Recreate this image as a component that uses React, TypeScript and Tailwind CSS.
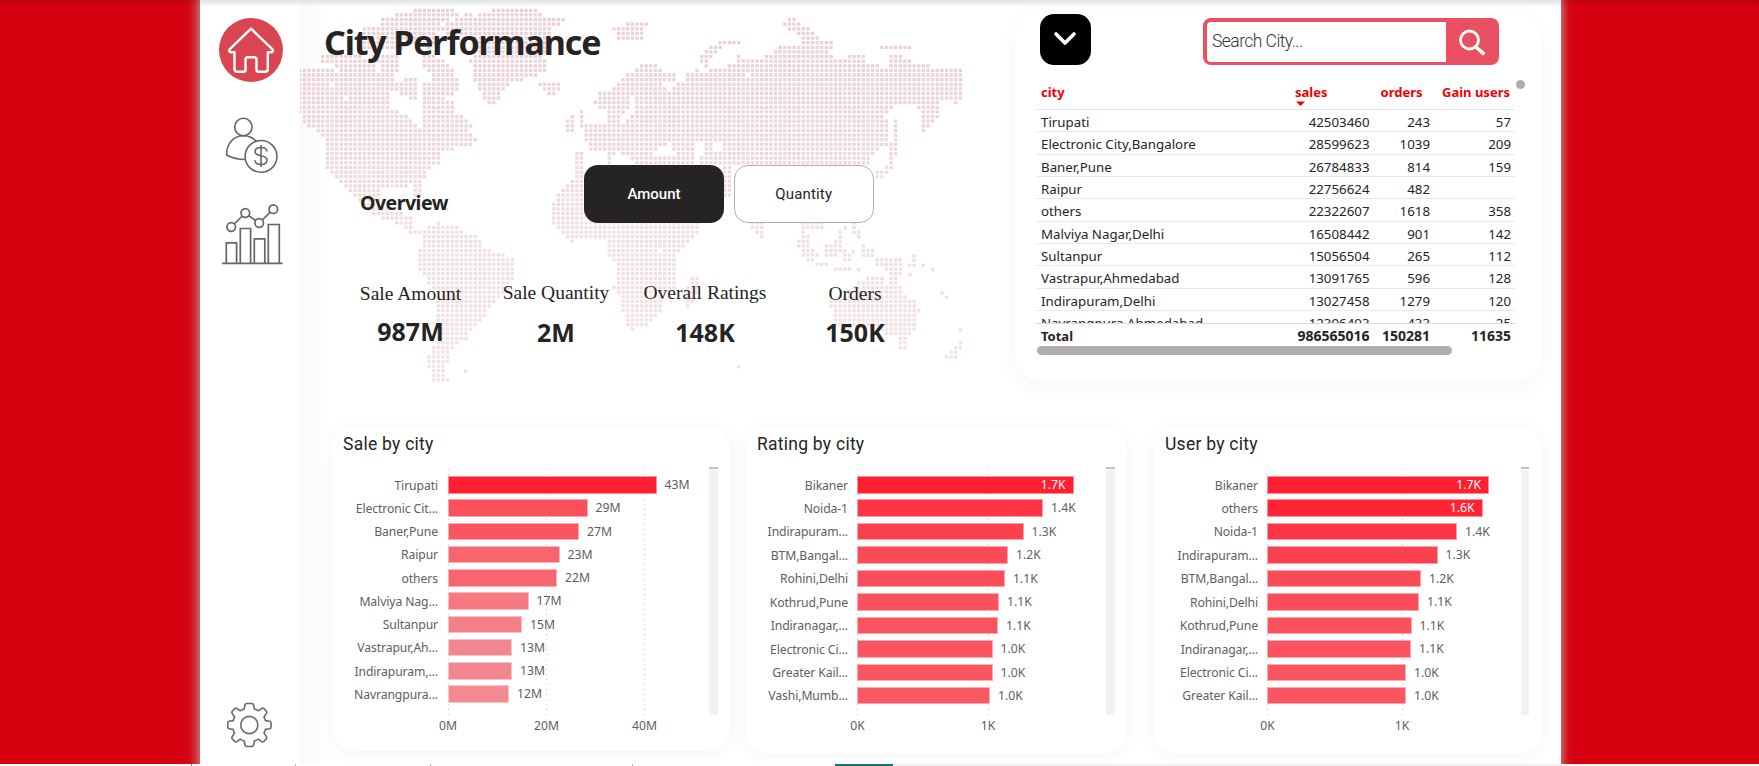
import React from "react";

type Point = [number, number];

/* Land outlines, in the units of the map's own 1986 x 1170 view box. */
const LAND: string[] = [
  // North and Central America
  "-5,205 100,205 105,192 60,192 60,163 110,163 112,178 130,165 190,165 195,178 232,165 290,165 292,215 280,235 300,250 328,225 355,245 355,290 332,302 285,268 268,290 268,332 295,335 325,350 352,375 366,380 366,292 430,292 432,305 462,305 460,340 500,352 516,380 502,400 530,414 530,426 490,442 430,455 418,470 415,490 388,510 380,535 362,552 362,590 343,590 343,556 300,560 245,562 240,590 238,615 262,622 265,636 312,636 312,650 338,650 338,690 375,690 375,706 328,706 310,680 270,662 225,650 200,632 172,600 130,565 115,545 78,505 78,420 60,405 15,370 -5,340",
  // Arctic islands
  "355,25 465,25 472,45 445,66 440,90 405,96 400,150 335,128 300,152 180,150 180,80 240,80 245,52 312,40",
  "368,165 400,165 440,180 465,215 478,245 465,290 368,290 368,255 400,235 368,200",
  "488,38 518,38 518,52 488,52",
  // Greenland
  "576,25 712,25 730,45 795,52 795,64 770,80 750,94 745,150 730,160 742,200 735,215 700,230 640,250 610,270 600,300 588,315 575,312 550,300 535,260 522,240 522,200 505,175 540,160 530,120 440,106 435,66 464,66 464,52 525,52 535,38 570,38",
  // Iceland and Ireland
  "713,247 780,247 780,275 755,290 738,285 735,275 727,262 713,260",
  "798,360 798,400 811,400 822,385 822,345 811,345",
  // South America
  "380,677 475,677 490,695 530,705 545,725 545,745 575,752 612,765 645,775 645,830 628,845 625,870 612,885 588,912 562,928 562,950 530,965 528,985 502,1000 502,1015 475,1030 460,1050 448,1062 448,1090 435,1092 435,1135 450,1138 450,1150 405,1150 392,1130 392,1105 380,1100 380,1070 400,1040 410,1000 410,880 380,850 380,835 365,820 352,800 352,750 368,740 368,705 380,705",
  // Africa and Iberia
  "852,455 817,455 817,540 800,560 785,575 770,590 757,620 757,665 770,690 800,712 808,732 825,732 828,718 908,718 925,735 925,765 950,790 950,850 938,862 950,870 965,920 980,980 995,998 1010,985 1045,975 1055,955 1080,945 1085,890 1110,870 1128,860 1128,770 1150,745 1175,725 1195,690 1195,668 852,668",
  "1172,830 1195,830 1195,870 1180,900 1165,928 1150,915 1152,880",
  // Svalbard, Novaya Zemlya and the other northern islands
  "935,82 960,82 990,66 1045,66 1030,92 1030,122 948,122 945,98",
  "1255,124 1320,124 1320,136 1265,140 1242,165 1222,190 1235,206 1212,206 1198,180 1215,150",
  "1465,52 1487,52 1500,80 1530,84 1545,105 1560,124 1510,124 1505,105 1460,95 1450,66",
  "1740,137 1835,137 1835,150 1740,150",
  // Eurasia
  "839,318 855,335 850,370 885,372 890,395 900,372 925,372 922,330 900,330 880,310 895,280 930,270 960,240 1000,210 1020,192 1060,192 1085,210 1128,222 1128,248 1090,250 1100,275 1135,248 1160,248 1160,222 1180,225 1190,205 1200,222 1250,205 1300,192 1310,165 1340,180 1375,175 1425,155 1440,138 1505,138 1505,122 1600,122 1600,145 1585,165 1640,180 1650,165 1700,165 1700,192 1765,200 1770,165 1795,165 1835,180 1850,195 1890,195 1895,208 1990,205 1990,300 1970,312 1950,300 1915,300 1920,320 1915,350 1890,380 1877,398 1865,390 1865,340 1890,315 1850,330 1840,312 1790,312 1770,330 1755,350 1768,380 1765,430 1735,450 1710,475 1705,500 1300,500 1300,595 1270,595 1270,500 1005,500 1005,480 990,475 950,455 935,470 930,495 920,495 920,460 870,450 868,430 845,425 845,385",
  // Japan
  "1780,360 1795,360 1795,465 1780,470 1782,505 1762,525 1738,540 1718,530 1718,512 1760,500 1768,440 1780,420",
  // India and South-East Asia
  "1352,668 1392,668 1392,720 1380,716 1365,696 1352,690",
  "1502,668 1572,668 1568,690 1512,690 1530,705 1528,730 1540,742 1542,762 1558,765 1545,785 1518,788 1505,755 1478,730 1500,720",
  "1615,695 1628,695 1628,745 1610,772 1575,772 1575,735 1605,728",
  "1655,668 1672,668 1668,690 1682,690 1682,716 1670,716 1655,700",
  "1632,750 1645,745 1655,788 1630,790",
  "1685,734 1700,734 1705,748 1725,748 1725,772 1760,770 1812,780 1812,815 1792,832 1765,828 1755,800 1725,800 1725,776 1685,772",
  "1545,788 1590,788 1590,802 1545,802",
  "1600,802 1655,802 1655,816 1600,816",
  // Australia and New Zealand
  "1700,830 1755,830 1755,850 1768,855 1768,830 1795,830 1800,860 1812,885 1848,900 1850,925 1865,935 1850,950 1848,985 1838,1010 1820,1010 1818,1052 1798,1052 1798,1015 1750,1000 1735,975 1680,985 1605,985 1602,925 1588,925 1588,895 1640,885 1660,850",
  "1975,1025 1990,1025 1990,1050 1972,1060 1972,1080 1935,1080 1935,1066 1960,1045",
];

/* Inland seas cut out of the land above. */
const WATER: string[] = [
  "990,300 1005,285 1010,335 975,370 955,365 985,330",
  "1058,470 1065,452 1095,438 1102,426 1118,430 1120,450 1125,468",
  "1180,500 1188,430 1212,430 1206,455 1200,500",
  "1238,430 1268,430 1268,455 1238,455",
  "135,290 148,290 148,304 135,304",
  "90,247 104,247 104,261 90,261",
  "104,206 118,206 118,220 104,220",
  "310,120 325,120 325,150 310,150",
  "225,185 245,185 245,212 225,212",
  "420,66 433,66 433,80 420,80",
  "1072,742 1092,742 1092,762 1072,762",
  "1335,215 1352,215 1352,235 1335,235",
];

/* Lone islands. */
const ISLANDS: Point[] = [
  [497, 1114], [415, 670], [1316, 1100], [1842, 768], [1842, 782], [1828, 796],
  [1842, 796], [1870, 796], [1898, 809], [1830, 823], [1926, 879], [1940, 892],
  [1981, 990], [1660, 755], [1676, 809], [1636, 684], [440, 628],
];

const PITCH = 13.86;

const parse = (s: string): Point[] =>
  s.split(" ").map((p) => p.split(",").map(Number) as Point);

const inside = (x: number, y: number, poly: Point[]) => {
  let hit = false;
  for (let i = 0, j = poly.length - 1; i < poly.length; j = i++) {
    const [xi, yi] = poly[i];
    const [xj, yj] = poly[j];
    if (yi > y !== yj > y && x < ((xj - xi) * (y - yi)) / (yj - yi) + xi) hit = !hit;
  }
  return hit;
};

const buildMap = () => {
  const land = LAND.map(parse);
  const water = WATER.map(parse);
  let d = "";
  const dot = (x: number, y: number) => {
    d += `M${(x - 4.9).toFixed(1)} ${(y - 4.9).toFixed(1)}h9.8v9.8h-9.8z`;
  };
  for (let r = 0; r < 82; r++) {
    for (let c = 0; c < 144; c++) {
      const x = -0.9 + c * PITCH;
      const y = 31 + r * PITCH;
      if (land.some((p) => inside(x, y, p)) && !water.some((p) => inside(x, y, p))) dot(x, y);
    }
  }
  ISLANDS.forEach(([x, y]) => dot(x, y));
  return d;
};

const MAP_PATH = buildMap();

const WorldMap = () => (
  <svg className="absolute left-0 top-0" width="662" height="390" viewBox="0 0 1986 1170">
    <defs>
      <linearGradient id="map-fade" gradientUnits="userSpaceOnUse" x1="0" y1="0" x2="0" y2="1170">
        <stop offset="0" stopColor="#ebced3" />
        <stop offset="0.35" stopColor="#edd5d9" />
        <stop offset="0.6" stopColor="#f0dfe1" />
        <stop offset="1" stopColor="#f4e1e3" />
      </linearGradient>
    </defs>
    <path d={MAP_PATH} fill="url(#map-fade)" />
  </svg>
);

const Sidebar = () => (
  <nav className="flex h-full w-[100px] shrink-0 flex-col bg-white pt-[18px] pb-[16px]">
    <svg className="ml-[19px]" width="64" height="64" viewBox="0 0 64 64" fill="none">
      <circle cx="32" cy="32" r="32" fill="#d94651" />
      <path
        d="M32 10.7 L53.3 31.2 C54.5 32.8 53.5 34.3 52 34.3 H48.8 V51 Q48.8 53.8 46 53.8 H39.5 Q37.5 53.8 37.5 51.8 V41.5 Q37.5 39.2 35.2 39.2 H28.8 Q26.5 39.2 26.5 41.5 V51.8 Q26.5 53.8 24.5 53.8 H18.3 Q15.5 53.8 15.5 51 V34.3 H12.2 C10.5 34.3 9.6 32.8 10.8 31.2 Z"
        stroke="#fff"
        strokeWidth="2.4"
        strokeLinejoin="round"
      />
    </svg>
    <svg className="ml-[24px] mt-[35px]" width="56" height="58" viewBox="0 0 56 58" fill="none" stroke="#666" strokeWidth="1.6">
      <circle cx="19.4" cy="10" r="8.7" />
      <path d="M32.6 24.8 C29.5 21 25 18.7 19.4 18.7 C9 18.7 2.6 27 2.6 38 C8 41 14 42.5 21.5 42.5" />
      <circle cx="37" cy="39.4" r="15.9" />
      <path d="M43 34.5 C43 31.8 40.5 30.5 37 30.5 C33 30.5 31 32.2 31 34.8 C31 40.5 43 37 43 43 C43 45.8 40.5 47.5 37 47.5 C33.2 47.5 31 46 31 43.3 M37 28 V50" />
    </svg>
    <svg className="ml-[21px] mt-[28px]" width="64" height="64" viewBox="0 0 64 64" fill="none" stroke="#666" strokeWidth="1.7">
      <path d="M1 60.3 H61.5" />
      <path d="M5.3 60 V39.8 H15.6 V60 M19.3 60 V25.5 H29.6 V60 M33.3 60 V35.8 H43.8 V60 M47.3 60 V21.5 H58.3 V60" />
      <circle cx="10.2" cy="24" r="4.3" />
      <circle cx="24.3" cy="10" r="4.3" />
      <circle cx="38.2" cy="20" r="4.3" />
      <circle cx="52.3" cy="6.2" r="4.3" />
      <path d="M13.2 21 L21.3 13 M27.8 12.6 L34.7 17.5 M41.2 17 L49.3 9.2" />
    </svg>
    <svg className="mt-auto ml-[27px]" width="45" height="46" viewBox="0 0 45 46" fill="none" stroke="#6a6a6a" strokeWidth="1.6" strokeLinejoin="round">
      <circle cx="22.3" cy="23" r="8.6" />
      <path d="M19.8 1.5 H24.8 Q26.3 1.5 26.6 3 L27.4 7 Q29.6 7.6 31.4 8.8 L34.6 6.4 Q35.8 5.6 36.9 6.6 L39.2 9 Q40.2 10.2 39.4 11.4 L37 15 Q38 16.8 38.4 18.6 L42.6 19.3 Q44 19.6 44 21 V25 Q44 26.4 42.6 26.7 L38.4 27.4 Q38 29.2 37 31 L39.4 34.6 Q40.2 35.8 39.2 37 L36.9 39.4 Q35.8 40.4 34.6 39.6 L31.4 37.2 Q29.6 38.4 27.4 39 L26.6 43 Q26.3 44.5 24.8 44.5 H19.8 Q18.3 44.5 18 43 L17.2 39 Q15 38.4 13.2 37.2 L10 39.6 Q8.8 40.4 7.7 39.4 L5.4 37 Q4.4 35.8 5.2 34.6 L7.6 31 Q6.6 29.2 6.2 27.4 L2 26.7 Q0.8 26.4 0.8 25 V21 Q0.8 19.6 2 19.3 L6.2 18.6 Q6.6 16.8 7.6 15 L5.2 11.4 Q4.4 10.2 5.4 9 L7.7 6.6 Q8.8 5.6 10 6.4 L13.2 8.8 Q15 7.6 17.2 7 L18 3 Q18.3 1.5 19.8 1.5 Z" />
    </svg>
  </nav>
);

const KPIS = [
  { label: "Sale Amount", value: "987M", box: "w-[101px]", gap: "ml-[60px]", nudge: "pt-[1px]", valueTop: "mt-[8px]" },
  { label: "Sale Quantity", value: "2M", box: "w-[108px]", gap: "ml-[41px]", nudge: "pt-0", valueTop: "mt-[10px]" },
  { label: "Overall Ratings", value: "148K", box: "w-[122px]", gap: "ml-[34px]", nudge: "pt-0", valueTop: "mt-[10px]" },
  { label: "Orders", value: "150K", box: "w-[58px]", gap: "ml-[60px]", nudge: "pt-[1px]", valueTop: "mt-[9px]" },
];

const Overview = () => (
  <section className="relative h-[412px] w-[715px] shrink-0">
    <WorldMap />
    <div className="relative flex flex-col">
      <h1 className="ml-[24px] mt-[18px] h-[49px] whitespace-nowrap font-['Noto_Sans'] text-[34px] font-bold leading-[48px] tracking-[-1.15px] text-[#252423]">
        City Performance
      </h1>
      <div className="mt-[98px] flex h-[58px]">
        <h2 className="ml-[60px] mt-[23px] w-[224px] font-['Noto_Sans'] text-[19.5px] font-bold leading-[30px] tracking-[-0.5px] text-[#252423]">
          Overview
        </h2>
        <button className="h-[58px] w-[140px] rounded-[14px] bg-[#252423] font-['Roboto'] text-[15px] font-medium text-white">
          Amount
        </button>
        <button className="ml-[9.5px] h-[58px] w-[140.5px] rounded-[14px] border border-[#b3b0ad] bg-white font-['Roboto'] text-[15px] font-normal tracking-[0.15px] text-[#252423]">
          Quantity
        </button>
      </div>
      <div className="mt-[57px] flex">
        {KPIS.map((k) => (
          <div key={k.label} className={`flex flex-col items-center ${k.box} ${k.gap} ${k.nudge}`}>
            <span className="whitespace-nowrap font-['Liberation_Serif'] text-[19.5px] leading-[26px] text-[#252423]">{k.label}</span>
            <span className={`font-['Noto_Sans'] text-[25px] font-bold leading-[32px] text-[#252423] ${k.valueTop}`}>{k.value}</span>
          </div>
        ))}
      </div>
    </div>
  </section>
);

const ROWS = [
  ["Tirupati", "42503460", "243", "57"],
  ["Electronic City,Bangalore", "28599623", "1039", "209"],
  ["Baner,Pune", "26784833", "814", "159"],
  ["Raipur", "22756624", "482", ""],
  ["others", "22322607", "1618", "358"],
  ["Malviya Nagar,Delhi", "16508442", "901", "142"],
  ["Sultanpur", "15056504", "265", "112"],
  ["Vastrapur,Ahmedabad", "13091765", "596", "128"],
  ["Indirapuram,Delhi", "13027458", "1279", "120"],
  ["Navrangpura,Ahmedabad", "12396403", "433", "25"],
];

const COLS = "grid grid-cols-[254px_74.5px_60.5px_81px] pl-[5px]";

const CityTable = () => (
  <section className="mt-[12px] h-[369px] w-[527px] shrink-0 rounded-[26px] bg-white pl-[21px] shadow-[0_6px_22px_rgba(0,0,0,0.04)]">
    <div className="flex h-[53px]">
      <button className="ml-[4px] mt-[2px] flex h-[50.5px] w-[50.5px] items-center justify-center rounded-[14px] bg-black">
        <svg width="24" height="16" viewBox="0 0 24 16" fill="none" stroke="#fff" strokeWidth="3.6" strokeLinecap="round" strokeLinejoin="round">
          <path d="M3 3 L12 12 L21 3" />
        </svg>
      </button>
      <div className="ml-[112.5px] mt-[6px] flex h-[47px] w-[296px] rounded-[8px] bg-[#e95062] py-[3.5px] pl-[4px]">
        <div className="flex h-full w-[239px] items-center rounded-l-[4px] bg-white pl-[5px] font-['Roboto'] text-[17.5px] font-light tracking-[-0.55px] text-[#333]">
          Search City...
        </div>
        <div className="flex flex-1 items-center justify-center pr-[2px]">
          <svg width="28" height="28" viewBox="0 0 28 28" fill="none" stroke="#fff" strokeWidth="2.8">
            <circle cx="11.5" cy="12" r="9" />
            <path d="M17.5 18.5 L26.3 26.3" strokeWidth="3.6" />
          </svg>
        </div>
      </div>
    </div>
    <div className="flex">
      <div className="mt-[15px] w-[479px] font-['Noto_Sans'] text-[13.3px] text-[#252423]">
        <div className={`${COLS} h-[30px] border-b border-[#e6e6e6] text-[13px] font-bold leading-[24px] text-[#f20000]`}>
          <span>city</span>
          <span className="relative">
            sales
            <svg className="absolute left-[1px] top-[21px]" width="9" height="6" viewBox="0 0 9 6">
              <path d="M0 0.5 H9 L4.5 5 Z" fill="#f00000" />
            </svg>
          </span>
          <span className="pl-[11px]">orders</span>
          <span className="whitespace-nowrap pr-px text-right">Gain users</span>
        </div>
        <div className="h-[213px] overflow-hidden">
          {ROWS.map((r) => (
            <div key={r[0]} className={`${COLS} h-[22.35px] border-b border-[#e9e9e9] leading-[25px]`}>
              <span className="whitespace-nowrap">{r[0]}</span>
              <span className="text-right">{r[1]}</span>
              <span className="text-right">{r[2]}</span>
              <span className="text-right">{r[3]}</span>
            </div>
          ))}
        </div>
        <div className={`${COLS} h-[23px] border-t border-[#dcdcdc] text-[14px] font-bold leading-[24px]`}>
          <span className="text-[13px]">Total</span>
          <span className="text-right">986565016</span>
          <span className="text-right">150281</span>
          <span className="text-right">11635</span>
        </div>
        <div className="ml-[0.5px] h-[8.5px] w-[415px] rounded-full bg-[#b0aead]" />
      </div>
      <div className="ml-[1px] mt-[15px] h-[9px] w-[9px] rounded-full bg-[#b0aead]" />
    </div>
  </section>
);

type Bar = { name: string; value: string; size: number; fill: string; within?: boolean };

const bar = (name: string, value: string, size: number, fill: string, within = false): Bar => ({ name, value, size, fill, within });

const SALES: Bar[] = [
  bar("Tirupati", "43M", 209, "#ff1f31"),
  bar("Electronic Cit...", "29M", 140, "#fb4f5c"),
  bar("Baner,Pune", "27M", 131.5, "#f95662"),
  bar("Raipur", "23M", 112, "#f8656f"),
  bar("others", "22M", 109.5, "#f76670"),
  bar("Malviya Nag...", "17M", 81, "#f57981"),
  bar("Sultanpur", "15M", 74.5, "#f48087"),
  bar("Vastrapur,Ah...", "13M", 64.5, "#f3878f"),
  bar("Indirapuram,...", "13M", 64.5, "#f3878f"),
  bar("Navrangpura...", "12M", 61.5, "#f48a91"),
];

const RATINGS: Bar[] = [
  bar("Bikaner", "1.7K", 216.5, "#ff1f31", true),
  bar("Noida-1", "1.4K", 186, "#fd3444"),
  bar("Indirapuram...", "1.3K", 166.5, "#fc414e"),
  bar("BTM,Bangal...", "1.2K", 151, "#fb4b58"),
  bar("Rohini,Delhi", "1.1K", 148, "#fb4d59"),
  bar("Kothrud,Pune", "1.1K", 142, "#fb515d"),
  bar("Indiranagar,...", "1.1K", 141, "#fa525e"),
  bar("Electronic Ci...", "1.0K", 135.5, "#fa5662"),
  bar("Greater Kail...", "1.0K", 135.5, "#fa5662"),
  bar("Vashi,Mumb...", "1.0K", 133, "#fa5864"),
];

const USERS: Bar[] = [
  bar("Bikaner", "1.7K", 222, "#ff1f31", true),
  bar("others", "1.6K", 215.5, "#ff2334", true),
  bar("Noida-1", "1.4K", 190, "#fd3444"),
  bar("Indirapuram...", "1.3K", 170.5, "#fc414e"),
  bar("BTM,Bangal...", "1.2K", 154, "#fb4b58"),
  bar("Rohini,Delhi", "1.1K", 152, "#fb4d59"),
  bar("Kothrud,Pune", "1.1K", 144.5, "#fb515d"),
  bar("Indiranagar,...", "1.1K", 144, "#fa525e"),
  bar("Electronic Ci...", "1.0K", 139, "#fa5662"),
  bar("Greater Kail...", "1.0K", 139, "#fa5662"),
];

type ChartProps = {
  title: string;
  bars: Bar[];
  ticks: { at: number; text: string }[];
  card: string;
  heading: string;
  labels: string;
  plot: string;
  row: string;
  track: string;
};

const BarChart = ({ title, bars, ticks, card, heading, labels, plot, row, track }: ChartProps) => (
  <section className={`shrink-0 rounded-[22px] bg-white shadow-[0_2px_18px_rgba(0,0,0,0.05)] ${card}`}>
    <h3 className={`h-[40px] pt-[4px] font-['Roboto'] text-[17.5px] leading-[26px] tracking-[0.25px] text-[#252423] ${heading}`}>{title}</h3>
    <div className="flex font-['Noto_Sans'] text-[12.2px] text-[#605e5c]">
      <div className={`mt-[6.5px] shrink-0 text-right tracking-[-0.1px] ${labels}`}>
        {bars.map((b) => (
          <div key={b.name} className={`whitespace-nowrap leading-[23px] ${row}`}>{b.name}</div>
        ))}
      </div>
      <div className={`relative shrink-0 pt-[9px] ${plot}`}>
        {ticks.map((t) => (
          <React.Fragment key={t.text}>
            <div
              className="absolute top-[2px] h-[247px] w-px bg-[repeating-linear-gradient(to_bottom,#c8c8c8_0_1px,transparent_1px_5px)]"
              style={{ left: t.at }}
            />
            <div className="absolute top-[250px] w-[40px] -translate-x-1/2 text-center leading-[18px]" style={{ left: t.at + 0.5 }}>
              {t.text}
            </div>
          </React.Fragment>
        ))}
        <div className="relative">
          {bars.map((b) => (
            <div key={b.name} className={`flex items-start ${row}`}>
              <div
                className="flex h-[17.5px] items-center justify-end border border-white/50 pr-[7px] text-white"
                style={{ width: b.size, backgroundColor: b.fill }}
              >
                {b.within ? b.value : null}
              </div>
              {b.within ? null : <span className="ml-[8px] leading-[17px]">{b.value}</span>}
            </div>
          ))}
        </div>
      </div>
      <div className={track}>
        <div className="h-[2px] bg-[#c2c0be]" />
        <div className="mt-px h-[245px] bg-[#f3f2f2]" />
      </div>
    </div>
  </section>
);

export default function App() {
  return (
    <div className="flex h-[766px] w-[1759px] flex-col overflow-hidden bg-[#f3f3f3]">
      <div className="relative flex h-[764px] bg-[#d7000f]">
        <div className="h-full w-[200px] shrink-0 bg-[linear-gradient(to_right,#d7000f_0,#d7000f_182px,#d20a17_190px,#cf2f38_195px,#d0646a_200px)]" />
        <Sidebar />
        <main className="h-full w-[1261px] shrink-0 bg-[linear-gradient(to_right,#fafafa_0,#fbfbfb_12px,#ffffff_24px)]">
          <div className="flex h-[427px]">
            <Overview />
            <CityTable />
          </div>
          <div className="flex items-start">
            <BarChart
              title="Sale by city"
              bars={SALES}
              ticks={[{ at: 0, text: "0M" }, { at: 98.5, text: "20M" }, { at: 196.5, text: "40M" }]}
              card="ml-[32px] h-[324px] w-[398px]"
              heading="pl-[11px]"
              labels="w-[106px]"
              plot="ml-[9.5px] w-[261.5px]"
              row="h-[23.27px]"
              track="w-[9px]"
            />
            <BarChart
              title="Rating by city"
              bars={RATINGS}
              ticks={[{ at: 0, text: "0K" }, { at: 130.5, text: "1K" }]}
              card="ml-[16px] h-[326px] w-[381px]"
              heading="pl-[11px]"
              labels="w-[102px]"
              plot="ml-[9px] w-[249px]"
              row="h-[23.44px]"
              track="w-[9px]"
            />
            <BarChart
              title="User by city"
              bars={USERS}
              ticks={[{ at: 0, text: "0K" }, { at: 134.5, text: "1K" }]}
              card="ml-[27px] h-[326px] w-[388px]"
              heading="pl-[11px]"
              labels="w-[104px]"
              plot="ml-[9px] w-[254px]"
              row="h-[23.44px]"
              track="w-[8px]"
            />
          </div>
        </main>
        <div className="h-full w-[198px] shrink-0 bg-[linear-gradient(to_right,#cf5f66_0,#cf2f38_4px,#d20a17_8px,#d7000f_16px)]" />
        <div className="absolute left-0 top-0 h-[6px] w-full bg-[linear-gradient(to_bottom,rgba(0,0,0,0.11),rgba(0,0,0,0.07)_50%,transparent)]" />
      </div>
      <div className="flex h-[2px] bg-[#f3f3f3]">
        <div className="h-full w-[835px] bg-white">
          <div className="flex h-full">
            <div className="ml-[191px] w-px bg-[#8f8f8f]" />
            <div className="ml-[103px] w-px bg-[#b5b5b5]" />
            <div className="ml-[134px] w-px bg-[#b5b5b5]" />
            <div className="ml-[201px] w-px bg-[#b5b5b5]" />
          </div>
        </div>
        <div className="h-full w-[58px] bg-[#117865]" />
      </div>
    </div>
  );
}
